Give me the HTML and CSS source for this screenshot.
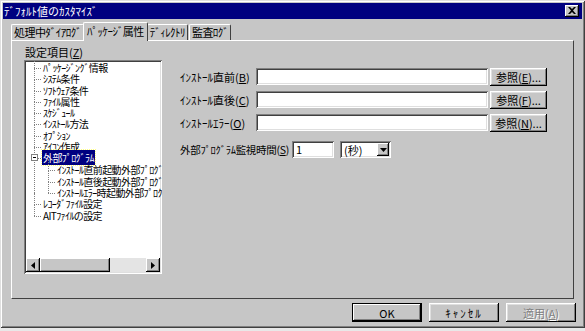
FILE: index.html
```html
<!DOCTYPE html>
<html lang="ja">
<head>
    <meta charset="UTF-8">
    <title>ﾃﾞﾌｫﾙﾄ値のｶｽﾀﾏｲｽﾞ</title>
    <link rel="stylesheet" href="styles.css">
</head>
<body>
    <div class="dialog">
        <div class="titlebar">
            <span class="title">ﾃﾞﾌｫﾙﾄ値のｶｽﾀﾏｲｽﾞ</span>
            <span class="close-btn">
                <svg width="8" height="7" viewBox="0 0 8 7"><path d="M0 0h2l2 2 2-2h2L5 3.5 8 7H6L4 5 2 7H0l3-3.5z" fill="#000"/></svg>
            </span>
        </div>

        <div class="tabs">
            <div class="tab">処理中ﾀﾞｲｱﾛｸﾞ</div>
            <div class="tab active">ﾊﾟｯｹｰｼﾞ属性</div>
            <div class="tab">ﾃﾞｨﾚｸﾄﾘ</div>
            <div class="tab">監査ﾛｸﾞ</div>
        </div>

        <div class="panel">
            <div class="left-col">
                <div class="group-label">設定項目(<u>Z</u>)</div>
                <div class="tree-box">
                    <div class="tree">
                        <div class="node">ﾊﾟｯｹｰｼﾞﾝｸﾞ情報</div>
                        <div class="node">ｼｽﾃﾑ条件</div>
                        <div class="node">ｿﾌﾄｳｪｱ条件</div>
                        <div class="node">ﾌｧｲﾙ属性</div>
                        <div class="node">ｽｹｼﾞｭｰﾙ</div>
                        <div class="node">ｲﾝｽﾄｰﾙ方法</div>
                        <div class="node">ｵﾌﾟｼｮﾝ</div>
                        <div class="node">ｱｲｺﾝ作成</div>
                        <div class="node expanded"><span class="toggle"></span><span class="selected">外部ﾌﾟﾛｸﾞﾗﾑ</span></div>
                        <div class="children">
                            <div class="node">ｲﾝｽﾄｰﾙ直前起動外部ﾌﾟﾛｸﾞﾗﾑ</div>
                            <div class="node">ｲﾝｽﾄｰﾙ直後起動外部ﾌﾟﾛｸﾞﾗﾑ</div>
                            <div class="node last">ｲﾝｽﾄｰﾙｴﾗｰ時起動外部ﾌﾟﾛｸﾞﾗﾑ</div>
                        </div>
                        <div class="node">ﾚｺｰﾀﾞﾌｧｲﾙ設定</div>
                        <div class="node last">AITﾌｧｲﾙの設定</div>
                    </div>
                    <div class="hscroll">
                        <span class="arrow-btn"><svg width="4" height="7" viewBox="0 0 4 7"><path d="M4 0v7L0 3.5z"/></svg></span>
                        <span class="thumb"></span>
                        <span class="track"></span>
                        <span class="arrow-btn"><svg width="4" height="7" viewBox="0 0 4 7"><path d="M0 0v7l4-3.5z"/></svg></span>
                    </div>
                </div>
            </div>

            <div class="right-col">
                <div class="form-row">
                    <label class="field-label">ｲﾝｽﾄｰﾙ直前(<u>B</u>)</label>
                    <span class="text-input wide"></span>
                    <span class="button browse">参照(<u>E</u>)...</span>
                </div>
                <div class="form-row">
                    <label class="field-label">ｲﾝｽﾄｰﾙ直後(<u>C</u>)</label>
                    <span class="text-input wide"></span>
                    <span class="button browse">参照(<u>F</u>)...</span>
                </div>
                <div class="form-row">
                    <label class="field-label">ｲﾝｽﾄｰﾙｴﾗｰ(<u>O</u>)</label>
                    <span class="text-input wide"></span>
                    <span class="button browse">参照(<u>N</u>)...</span>
                </div>
                <div class="form-row timer-row">
                    <label class="timer-label">外部ﾌﾟﾛｸﾞﾗﾑ監視時間(<u>S</u>)</label>
                    <span class="text-input small">1</span>
                    <span class="combo">
                        <span class="combo-text">(秒)</span>
                        <span class="combo-btn"><svg width="7" height="4" viewBox="0 0 7 4"><path d="M0 0h7L3.5 4z"/></svg></span>
                    </span>
                </div>
            </div>
        </div>

        <div class="footer">
            <span class="button default">OK</span>
            <span class="button cancel">ｷｬﾝｾﾙ</span>
            <span class="button disabled">適用(<u>A</u>)</span>
        </div>
    </div>
</body>
</html>
```

FILE: styles.css
```css
body {
    margin: 0;
    background-color: #e8e8e8;
    font-family: "Noto Sans CJK JP", "Liberation Sans", sans-serif;
    font-size: 11px;
    color: #000;
}
u {
    text-decoration: underline;
}
.dialog {
    width: 585px;
    height: 328px;
    box-sizing: border-box;
    background-color: #c6c6c6;
    padding: 3px;
    box-shadow: inset 1px 1px #dfdfdf, inset -1px -1px #404040, inset 2px 2px #fff, inset -2px -2px #808080;
    display: flex;
    flex-direction: column;
}
.titlebar {
    height: 16px;
    background-color: #000080;
    color: #fff;
    display: flex;
    align-items: center;
    justify-content: space-between;
    padding: 0 3px 0 1px;
}
.close-btn {
    width: 14px;
    height: 12px;
    box-sizing: border-box;
    background-color: #c6c6c6;
    box-shadow: inset -1px -1px #000, inset 1px 1px #fff, inset -2px -2px #808080;
    display: flex;
    align-items: center;
    justify-content: center;
    padding-bottom: 1px;
}

/* タブ */
.tabs {
    display: flex;
    align-items: flex-end;
    height: 21px;
    padding-left: 8px;
}
.tab {
    height: 15px;
    line-height: 15px;
    padding: 0 2px;
    margin-right: 1px;
    border: 1px solid #fff;
    border-right-color: #404040;
    border-bottom: none;
    border-radius: 2px 2px 0 0;
    letter-spacing: -0.55px;
    white-space: nowrap;
}
.tab.active {
    height: 18px;
    line-height: 17px;
    margin: 0 0 -1px -2px;
    padding: 0 3px;
    background-color: #c6c6c6;
    position: relative;
    z-index: 1;
}
.tab.active + .tab {
    margin-left: -1px;
}
.panel {
    height: 259px;
    margin: 0 8px 0 8px;
    box-sizing: border-box;
    border: 1px solid #fff;
    border-right-color: #404040;
    border-bottom-color: #404040;
    display: flex;
    padding: 5px 0 0 12px;
}

/* 左側ツリー */
.left-col {
    width: 138px;
    flex-shrink: 0;
    display: flex;
    flex-direction: column;
}
.group-label {
    height: 14px;
    line-height: 12px;
    padding-left: 1px;
}
.tree-box {
    height: 214px;
    box-sizing: border-box;
    background-color: #fff;
    box-shadow: inset 1px 1px #808080, inset -1px -1px #fff, inset 2px 2px #404040, inset -2px -2px #dfdfdf;
    padding: 2px;
    display: flex;
    flex-direction: column;
    overflow: hidden;
}
.tree {
    flex: 1;
    padding: 0 0 0 8px;
}
.node {
    position: relative;
    height: 11.3px;
    line-height: 11px;
    padding-left: 9px;
    white-space: nowrap;
    font-size: 10px;
    letter-spacing: -0.6px;
}
.node::before {
    content: "";
    position: absolute;
    left: 0;
    top: 6px;
    width: 7px;
    border-top: 1px dotted #808080;
}
.node::after {
    content: "";
    position: absolute;
    left: 0;
    top: -5px;
    height: 11.3px;
    border-left: 1px dotted #808080;
}
.node.expanded {
    height: 12px;
}
.toggle {
    position: absolute;
    left: -3px;
    top: 2px;
    width: 7px;
    height: 7px;
    box-sizing: border-box;
    border: 1px solid #808080;
    background: #fff linear-gradient(#000, #000) center / 3px 1px no-repeat;
    z-index: 1;
}
.selected {
    background-color: #000080;
    color: #fff;
    outline: 1px dotted #ffff80;
    padding: 0 1px;
    margin-left: -1px;
}
.children {
    position: relative;
    padding-left: 14px;
}
.children::before {
    content: "";
    position: absolute;
    left: 0;
    top: -5px;
    height: 100%;
    border-left: 1px dotted #808080;
}
.hscroll {
    height: 14px;
    flex-shrink: 0;
    display: flex;
    background-color: #c6c6c6;
}
.arrow-btn {
    width: 14px;
    height: 14px;
    box-sizing: border-box;
    background-color: #c6c6c6;
    box-shadow: inset -1px -1px #000, inset 1px 1px #fff, inset -2px -2px #808080;
    display: flex;
    align-items: center;
    justify-content: center;
}
.thumb {
    width: 70px;
    height: 14px;
    box-sizing: border-box;
    box-shadow: inset -1px -1px #000, inset 1px 1px #fff, inset -2px -2px #808080;
}
.track {
    flex: 1;
    background-color: #e4e4e4;
}

/* 右側フォーム */
.right-col {
    padding: 22px 0 0 18px;
}
.form-row {
    display: flex;
    align-items: center;
    height: 17px;
    margin-bottom: 6px;
}
.field-label {
    width: 76px;
    flex-shrink: 0;
    white-space: nowrap;
}
.text-input {
    height: 17px;
    flex-shrink: 0;
    box-sizing: border-box;
    background-color: #fff;
    box-shadow: inset 1px 1px #808080, inset -1px -1px #fff, inset 2px 2px #404040, inset -2px -2px #dfdfdf;
    padding: 2px 4px;
    line-height: 13px;
}
.text-input.wide {
    width: 232px;
}
.button {
    display: inline-flex;
    align-items: center;
    justify-content: center;
    flex-shrink: 0;
    box-sizing: border-box;
    background-color: #c6c6c6;
    box-shadow: inset -1px -1px #000, inset 1px 1px #fff, inset -2px -2px #808080, inset 2px 2px #dfdfdf;
    white-space: nowrap;
}
.button.browse {
    width: 57px;
    height: 18px;
    margin-left: 2px;
}
.timer-row {
    margin-top: 10px;
}
.timer-label {
    width: 112px;
    flex-shrink: 0;
    white-space: nowrap;
    font-size: 10.5px;
    letter-spacing: -0.3px;
}
.text-input.small {
    width: 42px;
}
.combo {
    width: 51px;
    height: 17px;
    flex-shrink: 0;
    margin-left: 6px;
    box-sizing: border-box;
    background-color: #fff;
    box-shadow: inset 1px 1px #808080, inset -1px -1px #fff, inset 2px 2px #404040, inset -2px -2px #dfdfdf;
    display: flex;
    align-items: center;
    padding: 2px;
}
.combo-text {
    flex: 1;
    padding-left: 2px;
}
.combo-btn {
    width: 12px;
    height: 13px;
    box-sizing: border-box;
    background-color: #c6c6c6;
    box-shadow: inset -1px -1px #000, inset 1px 1px #fff, inset -2px -2px #808080;
    display: flex;
    align-items: center;
    justify-content: center;
}

/* 下部ボタン */
.footer {
    display: flex;
    justify-content: flex-end;
    gap: 7px;
    padding: 4px 6px 0 0;
}
.footer .button {
    width: 70px;
    height: 19px;
}
.button.default {
    box-shadow: inset 0 0 0 1px #000, inset -2px -2px #000, inset 2px 2px #fff, inset -3px -3px #808080;
}
.button.cancel {
    letter-spacing: 2px;
}
.button.disabled {
    color: #808080;
    text-shadow: 1px 1px #fff;
}
```
